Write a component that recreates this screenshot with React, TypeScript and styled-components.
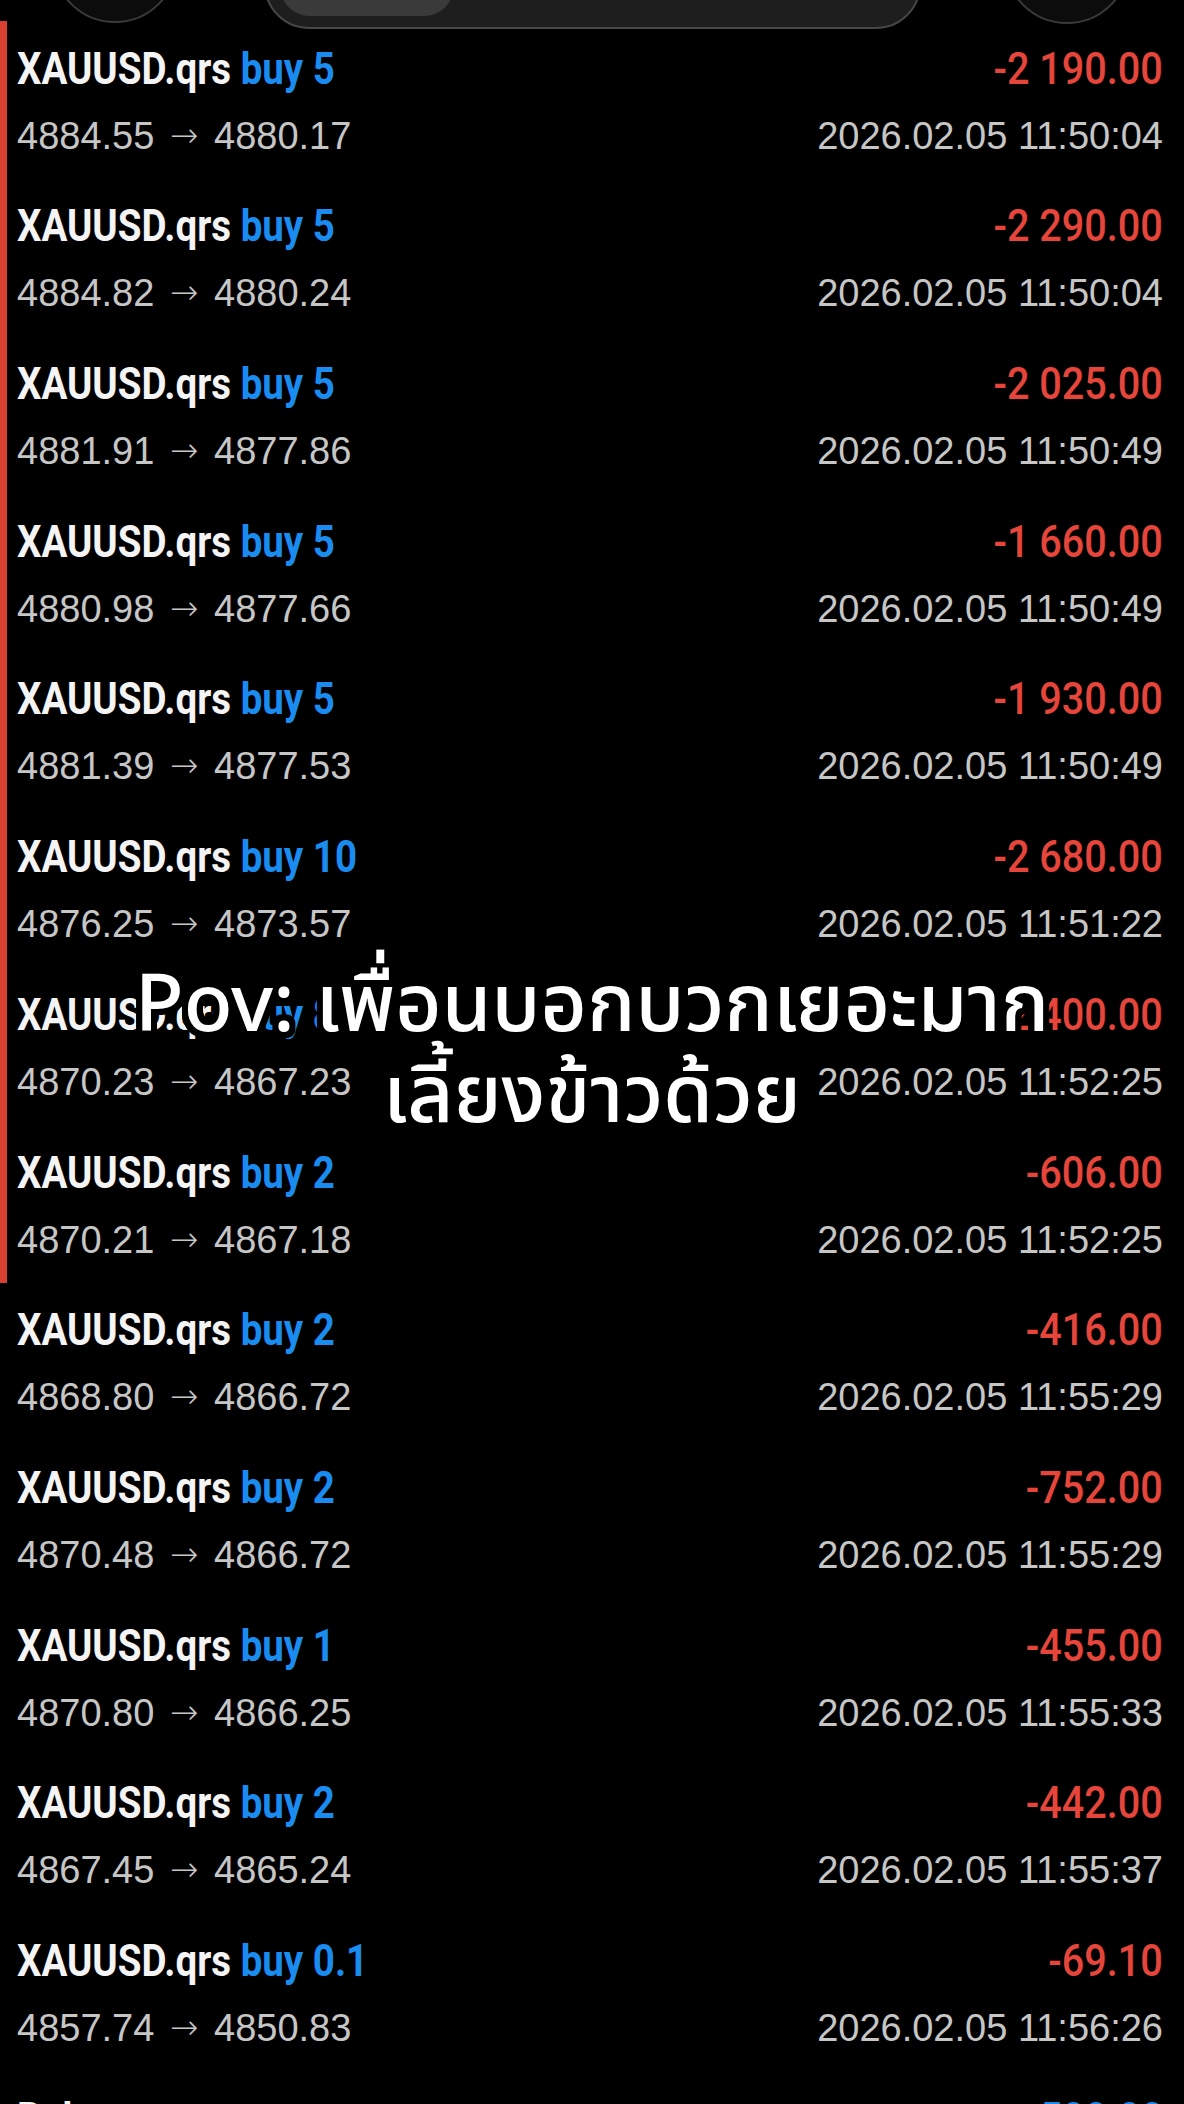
import React from "react";
import styled, { createGlobalStyle } from "styled-components";

const GlobalStyle = createGlobalStyle`
  html, body { margin: 0; padding: 0; background: #000; }
  body { width: 1184px; height: 2104px; overflow: hidden; }
`;

type Trade = {
  lots: string;
  profit: string;
  open: string;
  close: string;
  time: string;
};

const trades: Trade[] = [
  { lots: "5", profit: "-2 190.00", open: "4884.55", close: "4880.17", time: "11:50:04" },
  { lots: "5", profit: "-2 290.00", open: "4884.82", close: "4880.24", time: "11:50:04" },
  { lots: "5", profit: "-2 025.00", open: "4881.91", close: "4877.86", time: "11:50:49" },
  { lots: "5", profit: "-1 660.00", open: "4880.98", close: "4877.66", time: "11:50:49" },
  { lots: "5", profit: "-1 930.00", open: "4881.39", close: "4877.53", time: "11:50:49" },
  { lots: "10", profit: "-2 680.00", open: "4876.25", close: "4873.57", time: "11:51:22" },
  { lots: "8", profit: "-2 400.00", open: "4870.23", close: "4867.23", time: "11:52:25" },
  { lots: "2", profit: "-606.00", open: "4870.21", close: "4867.18", time: "11:52:25" },
  { lots: "2", profit: "-416.00", open: "4868.80", close: "4866.72", time: "11:55:29" },
  { lots: "2", profit: "-752.00", open: "4870.48", close: "4866.72", time: "11:55:29" },
  { lots: "1", profit: "-455.00", open: "4870.80", close: "4866.25", time: "11:55:33" },
  { lots: "2", profit: "-442.00", open: "4867.45", close: "4865.24", time: "11:55:37" },
  { lots: "0.1", profit: "-69.10", open: "4857.74", close: "4850.83", time: "11:56:26" },
];

const Screen = styled.div`
  position: relative;
  width: 1184px;
  height: 2104px;
  overflow: hidden;
  background: #000;
  padding-top: 21px;
  box-sizing: border-box;
  display: flex;
  flex-direction: column;
`;

const Notch = styled.svg`
  position: absolute;
  top: 0;
  left: 0;
  width: 1184px;
  height: 40px;
  z-index: 3;
`;

const Group = styled.div<{ $marked?: boolean }>`
  position: relative;
  display: flex;
  flex-direction: column;
  &::before {
    content: "";
    display: ${(p) => (p.$marked ? "block" : "none")};
    position: absolute;
    left: 0;
    top: 0;
    bottom: 0;
    width: 7px;
    background: #d8402f;
  }
`;

const Row = styled.div`
  height: 157.7px;
  box-sizing: border-box;
  padding: 22.7px 21px 0 17px;
  display: grid;
  grid-template-columns: 1fr auto;
  grid-template-rows: 50px 44px;
  row-gap: 19px;
  align-items: baseline;
`;

const Title = styled.div`
  font-family: Roboto, "Liberation Sans", sans-serif;
  font-weight: 700;
  font-size: 44px;
  line-height: 50px;
  color: #f4f4f4;
  white-space: nowrap;
  transform: scaleX(0.875);
  transform-origin: left center;
`;

const Side = styled.span`
  color: #1a8cf0;
`;

const Profit = styled.div<{ $tone: "loss" | "gain" }>`
  font-family: Roboto, "Liberation Sans", sans-serif;
  font-weight: 500;
  font-size: 45px;
  line-height: 50px;
  color: ${(p) => (p.$tone === "loss" ? "#e5453a" : "#1a8cf0")};
  text-align: right;
  white-space: nowrap;
  transform: scaleX(0.88);
  transform-origin: right center;
`;

const Meta = styled.div<{ $align?: "left" | "right" }>`
  font-family: "Liberation Sans", Arial, sans-serif;
  font-size: 38px;
  line-height: 44px;
  color: #c6c6c6;
  text-align: ${(p) => p.$align ?? "left"};
  white-space: nowrap;
`;

const Arrow = styled.span`
  display: inline-block;
  font-family: "DejaVu Sans", sans-serif;
  font-weight: 300;
  font-size: 34px;
  margin: 0 5px;
  vertical-align: 2px;
`;

const Caption = styled.div`
  position: absolute;
  left: 0;
  right: 0;
  top: 961px;
  z-index: 4;
  display: flex;
  flex-direction: column;
  align-items: center;
  font-family: "Noto Sans Thai", "Noto Sans", "Liberation Sans", sans-serif;
  font-weight: 500;
  font-size: 80px;
  line-height: 91px;
  color: #fff;
  text-shadow:
    0 0 6px #000, 5px 5px 0 #000, -5px -5px 0 #000, 5px -5px 0 #000,
    -5px 5px 0 #000, 6px 0 0 #000, -6px 0 0 #000, 0 6px 0 #000, 0 -6px 0 #000,
    3px 6px 0 #000, -3px 6px 0 #000, 3px -6px 0 #000, -3px -6px 0 #000,
    6px 3px 0 #000, -6px 3px 0 #000, 6px -3px 0 #000, -6px -3px 0 #000;
`;

const CaptionLine = styled.span`
  white-space: nowrap;
`;

function TradeRow({ t }: { t: Trade }) {
  return (
    <Row>
      <Title>
        XAUUSD.qrs <Side>buy {t.lots}</Side>
      </Title>
      <Profit $tone="loss">{t.profit}</Profit>
      <Meta>
        {t.open} <Arrow>→</Arrow> {t.close}
      </Meta>
      <Meta $align="right">2026.02.05 {t.time}</Meta>
    </Row>
  );
}

export default function App() {
  return (
    <>
      <GlobalStyle />
      <Screen>
        <Notch viewBox="0 0 1184 40">
          <circle cx="115" cy="-40" r="62" fill="#0c0c0c" stroke="#3a3a3a" strokeWidth="2" />
          <rect x="265" y="-70" width="655" height="98" rx="44" fill="#1e1e1e" stroke="#474747" strokeWidth="2" />
          <rect x="280" y="-60" width="174" height="76" rx="30" fill="#3a3a3a" />
          <circle cx="1067" cy="-39" r="62" fill="#0c0c0c" stroke="#3a3a3a" strokeWidth="2" />
        </Notch>
        <Group $marked>
          {trades.slice(0, 8).map((t, i) => (
            <TradeRow key={i} t={t} />
          ))}
        </Group>
        <Group>
          {trades.slice(8).map((t, i) => (
            <TradeRow key={i} t={t} />
          ))}
          <Row>
            <Title>Balance</Title>
            <Profit $tone="gain">500.00</Profit>
          </Row>
        </Group>
        <Caption>
          <CaptionLine>Pov: เพื่อนบอกบวกเยอะมาก</CaptionLine>
          <CaptionLine>เลี้ยงข้าวด้วย</CaptionLine>
        </Caption>
      </Screen>
    </>
  );
}
